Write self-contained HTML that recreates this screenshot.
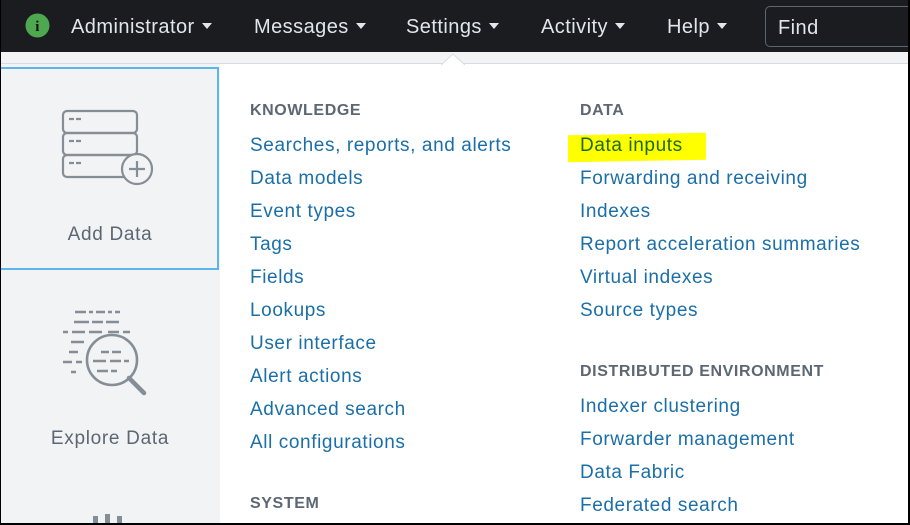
<!DOCTYPE html>
<html><head><style>
*{margin:0;padding:0;box-sizing:border-box}
body{width:910px;height:525px;overflow:hidden;background:#000;font-family:"Liberation Sans",sans-serif;position:relative}
#wrap{position:absolute;left:1px;top:0;width:907px;height:523px;background:#fff;overflow:hidden}
#nav{position:absolute;left:0;top:0;width:907px;height:52px;background:#1a1c20;color:#e1e6eb;font-size:20px;letter-spacing:.45px}
.ni{position:absolute;top:16px;white-space:nowrap}
.tri{display:inline-block;width:0;height:0;border-left:5px solid transparent;border-right:5px solid transparent;border-top:6px solid #e1e6eb;vertical-align:middle;margin-left:7px;margin-top:-3px}
#find{position:absolute;left:764px;top:6px;width:160px;height:41px;border:1px solid #5c6773;border-radius:5px;padding:10px 0 0 12px}
#strip{position:absolute;left:0;top:52px;width:907px;height:12px;background:#f2f3f5;border-bottom:1px solid #d8dce1}
#left{position:absolute;left:0;top:64px;width:219px;height:470px;background:#f2f3f5}
#add{position:absolute;left:-2px;top:67px;width:220px;height:203px;border:2px solid #5cb6ec;background:#f2f3f5}
.lbl{position:absolute;width:218px;text-align:center;color:#5c6773;font-size:19px;letter-spacing:.7px}
.h{position:absolute;font-size:16px;font-weight:bold;color:#5c6773;letter-spacing:.6px}
.l{position:absolute;font-size:19px;color:#1b6fa8;white-space:nowrap;letter-spacing:.6px}
</style></head><body><div id="wrap">
<div id="nav">
<svg style="position:absolute;left:24px;top:13px" width="25" height="25"><circle cx="12.5" cy="12.5" r="12" fill="#4ea84f"/><text x="12.5" y="18" font-family="Liberation Serif" font-weight="bold" font-size="15" fill="#111" text-anchor="middle">i</text></svg>
<div class="ni" style="left:70px">Administrator<span class="tri"></span></div>
<div class="ni" style="left:253px">Messages<span class="tri"></span></div>
<div class="ni" style="left:405px">Settings<span class="tri"></span></div>
<div class="ni" style="left:540px">Activity<span class="tri"></span></div>
<div class="ni" style="left:666px">Help<span class="tri"></span></div>
<div id="find">Find</div>
</div>
<div id="strip"></div>
<svg style="position:absolute;left:440px;top:52px" width="24" height="14"><path d="M0 13 L12 2 L24 13" fill="#fff" stroke="#d8dce1"/></svg>
<div id="left"></div>
<div id="add"></div>
<svg style="position:absolute;left:60px;top:109px" width="95" height="80" fill="none" stroke="#858d96" stroke-width="2.2">
<rect x="2" y="2" width="74" height="22" rx="4"/><rect x="2" y="24" width="74" height="22" rx="4"/><path d="M66 68 H6 a4 4 0 0 1 -4 -4 V50 a4 4 0 0 1 4 -4 H70"/>
<path d="M8 10h5M15 10h5M8 32h5M15 32h5M8 54h5M15 54h5"/>
<circle cx="76" cy="60" r="15" fill="#f2f3f5"/><path d="M76 52v16M68 60h16"/></svg>
<div class="lbl" style="top:224px">Add Data</div>
<svg style="position:absolute;left:60px;top:309px" width="92" height="92" fill="none" stroke="#858d96" stroke-width="2.6">
<path d="M14 3h11M28 3h4M35 3h9M47 3h4M54 3h5M13 13h15M31 13h11M45 13h13M2 23h5M11 23h13M28 23h13M47 23h11M62 23h7M10 33h13M52 33h11M8 43h9M2 53h9M15 53h6M10 63h5"/>
<circle cx="51" cy="51" r="25" fill="#f2f3f5"/><path d="M68 69l15 15" stroke-width="4.5" stroke-linecap="round"/>
<path d="M40 43h8M51 43h9M32 52h13M49 52h11M63 52h5M36 62h11M50 62h6"/></svg>
<div class="lbl" style="top:428px">Explore Data</div>
<svg style="position:absolute;left:90px;top:514px" width="40" height="12" fill="#858d96"><rect x="2" y="2" width="5" height="10"/><rect x="14" y="0" width="5" height="12"/><rect x="26" y="2" width="5" height="10"/></svg>

<div class="h" style="left:249px;top:102px">KNOWLEDGE</div>
<div class="l" style="left:249px;top:135px">Searches, reports, and alerts</div>
<div class="l" style="left:249px;top:168px">Data models</div>
<div class="l" style="left:249px;top:201px">Event types</div>
<div class="l" style="left:249px;top:234px">Tags</div>
<div class="l" style="left:249px;top:267px">Fields</div>
<div class="l" style="left:249px;top:300px">Lookups</div>
<div class="l" style="left:249px;top:333px">User interface</div>
<div class="l" style="left:249px;top:366px">Alert actions</div>
<div class="l" style="left:249px;top:399px">Advanced search</div>
<div class="l" style="left:249px;top:432px">All configurations</div>
<div class="h" style="left:249px;top:495px">SYSTEM</div>

<div class="h" style="left:579px;top:102px">DATA</div>
<div style="position:absolute;left:567px;top:134px;width:138px;height:27px;background:#ffff00;transform:skewY(-1deg)"></div>
<div class="l" style="left:579px;top:135px;color:#1d6a1a">Data inputs</div>
<div class="l" style="left:579px;top:168px">Forwarding and receiving</div>
<div class="l" style="left:579px;top:201px">Indexes</div>
<div class="l" style="left:579px;top:234px">Report acceleration summaries</div>
<div class="l" style="left:579px;top:267px">Virtual indexes</div>
<div class="l" style="left:579px;top:300px">Source types</div>
<div class="h" style="left:579px;top:363px">DISTRIBUTED ENVIRONMENT</div>
<div class="l" style="left:579px;top:396px">Indexer clustering</div>
<div class="l" style="left:579px;top:429px">Forwarder management</div>
<div class="l" style="left:579px;top:462px">Data Fabric</div>
<div class="l" style="left:579px;top:495px">Federated search</div>
</div></body></html>
